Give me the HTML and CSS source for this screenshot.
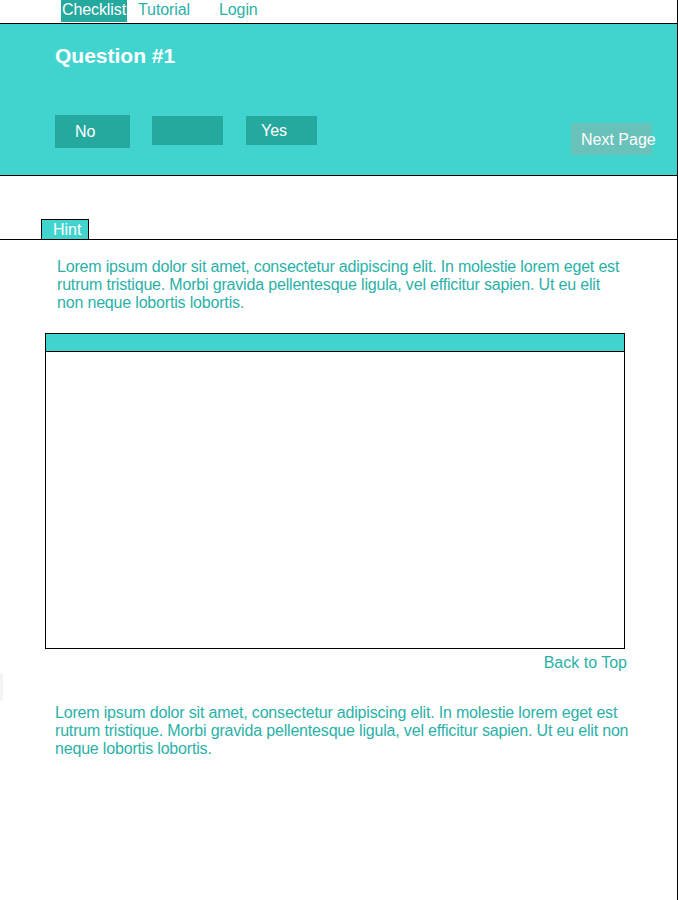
FILE: index.html
```html
<!DOCTYPE html>
<html lang="en">
<head>
<meta charset="utf-8">
<title>Checklist</title>
<link rel="stylesheet" href="styles.css">
</head>
<body>
<div class="page">
  <nav class="nav">
    <a class="nav-link nav-active" href="#">Checklist</a>
    <a class="nav-link nav-tutorial" href="#">Tutorial</a>
    <a class="nav-link nav-login" href="#">Login</a>
  </nav>
  <header class="question">
    <h1 class="question-title">Question #1</h1>
    <div class="answer-row">
      <button class="answer answer-no">No</button>
      <button class="answer answer-mid"></button>
      <button class="answer answer-yes">Yes</button>
      <button class="next-page">Next Page</button>
    </div>
  </header>
  <div class="tabbar">
    <div class="tab">Hint</div>
  </div>
  <p class="text text-first">Lorem ipsum dolor sit amet, consectetur adipiscing elit. In molestie lorem eget est rutrum tristique. Morbi gravida pellentesque ligula, vel efficitur sapien. Ut eu elit non neque lobortis lobortis.</p>
  <div class="panel">
    <div class="panel-head"></div>
  </div>
  <a class="back-top" href="#">Back to Top</a>
  <div class="edge-mark"></div>
  <p class="text text-second">Lorem ipsum dolor sit amet, consectetur adipiscing elit. In molestie lorem eget est rutrum tristique. Morbi gravida pellentesque ligula, vel efficitur sapien. Ut eu elit non neque lobortis lobortis.</p>
</div>
</body>
</html>
```
FILE: styles.css
```css
html, body {
  margin: 0;
  padding: 0;
  background: #ffffff;
}
body {
  font-family: "Liberation Sans", Arial, sans-serif;
  font-size: 16px;
  color: #2ab1a7;
}
.page {
  width: 677px;
  min-height: 900px;
  border-right: 1px solid #000;
}
.nav {
  height: 23px;
  display: flex;
  align-items: flex-start;
  padding-left: 61px;
  box-sizing: border-box;
}
.nav-link {
  display: block;
  color: #2ab1a7;
  text-decoration: none;
  line-height: 18px;
  height: 22px;
  padding: 1px 1px 0;
  box-sizing: border-box;
  letter-spacing: -0.1px;
}
.nav-active {
  background: #25a99e;
  color: #ffffff;
}
.nav-tutorial {
  margin-left: 10px;
}
.nav-login {
  margin-left: 27px;
}
.question {
  height: 153px;
  box-sizing: border-box;
  background: #41d4cf;
  border-top: 1px solid #000;
  border-bottom: 1px solid #000;
  padding: 20px 25px 0 55px;
}
.question-title {
  margin: 0;
  font-size: 21px;
  line-height: 24px;
  font-weight: bold;
  color: #ffffff;
}
.answer-row {
  display: flex;
  align-items: flex-start;
  margin-top: 47px;
}
.answer, .next-page {
  border: 0;
  margin: 0;
  font-family: inherit;
  font-size: 16px;
  color: #ffffff;
  text-align: left;
  box-sizing: border-box;
  padding: 0;
}
.answer {
  background: #25a99e;
}
.answer-no {
  width: 75px;
  height: 33px;
  line-height: 33px;
  padding-left: 20px;
}
.answer-mid {
  width: 71px;
  height: 29px;
  margin-top: 1px;
  margin-left: 22px;
}
.answer-yes {
  width: 71px;
  height: 29px;
  line-height: 27px;
  margin-top: 1px;
  margin-left: 23px;
  padding-left: 15px;
}
.next-page {
  margin-left: auto;
  margin-top: 8px;
  width: 81px;
  height: 32px;
  line-height: 31px;
  padding-left: 10px;
  background: #68c2b9;
  white-space: nowrap;
  overflow: visible;
}
.tabbar {
  display: flex;
  padding: 43px 0 0 41px;
  border-bottom: 1px solid #000;
}
.tab {
  width: 48px;
  height: 20px;
  box-sizing: border-box;
  border: 1px solid #000;
  border-bottom: 0;
  background: #41d4cf;
  color: #ffffff;
  line-height: 20px;
  padding-left: 11px;
}
.text {
  margin: 0;
  line-height: 18px;
  letter-spacing: -0.18px;
}
.text-first {
  margin: 18px 0 0 57px;
  width: 566px;
}
.panel {
  margin: 21px 0 0 45px;
  width: 580px;
  height: 316px;
  box-sizing: border-box;
  border: 1px solid #000;
}
.panel-head {
  height: 18px;
  box-sizing: border-box;
  background: #41d4cf;
  border-bottom: 1px solid #000;
}
.back-top {
  display: block;
  margin-top: 5px;
  padding-right: 50px;
  text-align: right;
  line-height: 18px;
  color: #2ab1a7;
  text-decoration: none;
}
.edge-mark {
  width: 3px;
  height: 28px;
  margin-top: 1px;
  background: #f4f4f4;
}
.text-second {
  margin: 3px 0 0 55px;
  width: 575px;
}
```
